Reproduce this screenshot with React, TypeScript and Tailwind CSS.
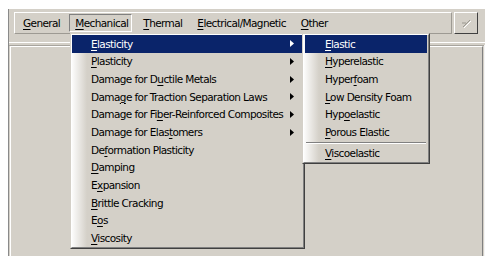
import React from 'react';

type Item = { label: string; u: number; sub?: boolean; active?: boolean };

const mechanicalItems: Item[] = [
  { label: 'Elasticity', u: 0, sub: true, active: true },
  { label: 'Plasticity', u: 0, sub: true },
  { label: 'Damage for Ductile Metals', u: 12, sub: true },
  { label: 'Damage for Traction Separation Laws', u: 4, sub: true },
  { label: 'Damage for Fiber-Reinforced Composites', u: 13, sub: true },
  { label: 'Damage for Elastomers', u: 15, sub: true },
  { label: 'Deformation Plasticity', u: 2 },
  { label: 'Damping', u: 0 },
  { label: 'Expansion', u: 1 },
  { label: 'Brittle Cracking', u: 0 },
  { label: 'Eos', u: 1 },
  { label: 'Viscosity', u: 0 },
];

const elasticityItems: Item[] = [
  { label: 'Elastic', u: 0, active: true },
  { label: 'Hyperelastic', u: 0 },
  { label: 'Hyperfoam', u: 5 },
  { label: 'Low Density Foam', u: 0 },
  { label: 'Hypoelastic', u: 3 },
  { label: 'Porous Elastic', u: 0 },
];

const topMenus = ['General', 'Mechanical', 'Thermal', 'Electrical/Magnetic', 'Other'];

// label with the mnemonic letter underlined
const Mnemonic = ({ label, u }: { label: string; u: number }) => (
  <span className="whitespace-nowrap">
    {label.slice(0, u)}
    <span className="underline decoration-1 underline-offset-[2px]">{label[u]}</span>
    {label.slice(u + 1)}
  </span>
);

const Arrow = ({ white }: { white?: boolean }) => (
  <svg width="4" height="7" viewBox="0 0 4 7" className="shrink-0">
    <polygon points="0,0 4,3.5 0,7" fill={white ? '#ffffff' : '#000000'} />
  </svg>
);

const MenuRow = ({ item, pl }: { item: Item; pl: string }) => (
  <div
    className={`flex h-[17.7px] items-center justify-between pr-[8px] ${pl} ${
      item.active ? 'bg-[#0a246a] text-white' : 'text-black'
    }`}
  >
    <Mnemonic label={item.label} u={item.u} />
    {item.sub && <Arrow white={item.active} />}
  </div>
);

export default function App() {
  return (
    <div className="relative h-[264px] w-[494px] overflow-hidden bg-white pl-[8px] pt-[9px] font-['DejaVu_Sans',sans-serif] text-[10.5px] leading-none tracking-[-0.6px]">
      <div className="flex h-[247px] w-[477px] flex-col border-l border-[#8a8a8a] bg-[#d4d0c8]">
        {/* menu bar */}
        <div className="ml-[5px] mt-[3px] flex h-[22px] items-stretch gap-[2px]">
          <div className="flex w-[438px] items-center gap-[5px] border border-b-[#9d9a93] border-l-white border-r-[#9d9a93] border-t-white pl-[2px]">
            {topMenus.map((m) => (
              <div
                key={m}
                className={`flex h-[18px] items-center pl-[5px] pr-[3px] ${
                  m === 'Mechanical'
                    ? 'border border-b-white border-l-[#808080] border-r-white border-t-[#808080]'
                    : 'border border-transparent'
                }`}
              >
                <Mnemonic label={m} u={0} />
              </div>
            ))}
          </div>
          <div className="flex w-[24px] items-center justify-center border border-b-[#404040] border-l-white border-r-[#404040] border-t-white">
            <svg width="12" height="10" viewBox="0 0 12 10">
              <path d="M3 9 L10 2" stroke="#ffffff" strokeWidth="1" transform="translate(1 1)" />
              <path d="M3 9 L10 2 M2 5 L6 5" stroke="#9a978f" strokeWidth="1" />
            </svg>
          </div>
        </div>

        {/* separator */}
        <div className="mt-[8px] h-px bg-white" />
        <div className="mt-[2px] h-px bg-[#a8a59e]" />

        {/* content panel */}
        <div className="ml-px mr-[2px] flex-1 border-l border-r border-t border-l-white border-r-[#808080] border-t-white" />
      </div>
      <div className="absolute right-[9px] top-[45px] h-[211px] w-px bg-[#f4f4f4]" />

      {/* Mechanical dropdown */}
      <div className="absolute left-[70px] top-[33px] w-[235px] border border-b-[#404040] border-l-[#d4d0c8] border-r-[#404040] border-t-[#d4d0c8] bg-[linear-gradient(to_right,#ffffff,#d4d0c8_16px)]">
        <div className="border border-b-[#808080] border-l-white border-r-[#808080] border-t-white pr-px">
          {mechanicalItems.map((it) => (
            <MenuRow key={it.label} item={it} pl="pl-[19px]" />
          ))}
        </div>
      </div>

      {/* Elasticity submenu */}
      <div className="absolute left-[302px] top-[33px] w-[128px] border border-b-[#404040] border-l-[#d4d0c8] border-r-[#404040] border-t-[#d4d0c8] bg-[linear-gradient(to_right,#ffffff,#d4d0c8_16px)]">
        <div className="border border-b-[#808080] border-l-white border-r-[#808080] border-t-white px-px">
          {elasticityItems.map((it) => (
            <MenuRow key={it.label} item={it} pl="pl-[20px]" />
          ))}
          <div className="mx-[1px] mt-[1px] h-[2px] border-b border-t border-b-white border-t-[#808080]" />
          <MenuRow item={{ label: 'Viscoelastic', u: 0 }} pl="pl-[20px]" />
        </div>
      </div>
    </div>
  );
}
